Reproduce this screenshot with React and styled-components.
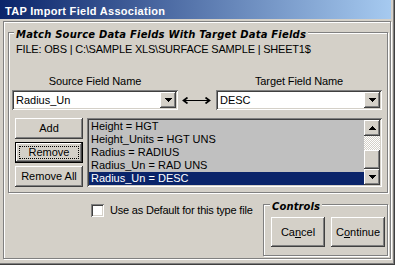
import styled, { createGlobalStyle } from "styled-components";

const FACE = "#d4d0c8";
const raised = `box-shadow: inset -1px -1px #404040, inset 1px 1px #fff, inset -2px -2px #808080, inset 2px 2px ${FACE};`;
const sunken = `box-shadow: inset 1px 1px #808080, inset -1px -1px #fff, inset 2px 2px #404040, inset -2px -2px ${FACE};`;
const etched = `border: 1px solid #808080; box-shadow: inset 1px 1px #fff, 1px 1px #fff;`;

const fields = [
  "Height = HGT",
  "Height_Units = HGT UNS",
  "Radius = RADIUS",
  "Radius_Un = RAD UNS",
  "Radius_Un = DESC",
];

const GlobalStyle = createGlobalStyle`
  html, body { margin: 0; padding: 0; background: ${FACE}; }
  body {
    font-family: "Liberation Sans", Arial, sans-serif;
    font-size: 11px;
    line-height: 13px;
    color: #000;
  }
`;

function Arrow({ up }) {
  return (
    <svg width="7" height="4" viewBox="0 0 7 4" shapeRendering="crispEdges">
      <path
        d={up ? "M3 0h1v1H3z M2 1h3v1H2z M1 2h5v1H1z M0 3h7v1H0z" : "M0 0h7v1H0z M1 1h5v1H1z M2 2h3v1H2z M3 3h1v1H3z"}
        fill="#000"
      />
    </svg>
  );
}

function Combo({ value }) {
  return (
    <ComboBox>
      <ComboText>{value}</ComboText>
      <DropButton>
        <Arrow />
      </DropButton>
    </ComboBox>
  );
}

export default function App() {
  return (
    <>
      <GlobalStyle />
      <Window>
        <TitleBar>TAP Import Field Association</TitleBar>
        <Body>
          <Frame>
            <GroupBox>
              <Caption $indent={2} $spacing={0.2}>Match Source Data Fields With Target Data Fields</Caption>
              <FileLine>FILE: OBS | C:\SAMPLE XLS\SURFACE SAMPLE | SHEET1$</FileLine>
              <PickGrid>
                <FieldLabel>Source Field Name</FieldLabel>
                <span />
                <FieldLabel>Target Field Name</FieldLabel>
                <Combo value="Radius_Un" />
                <LinkArrow width="29" height="7" viewBox="0 0 29 7">
                  <polyline points="5.5,0.5 1.5,3.5 5.5,6.5" fill="none" stroke="#000" strokeWidth="1.7" />
                  <line x1="2" y1="3.5" x2="27" y2="3.5" stroke="#000" strokeWidth="1" />
                  <polyline points="23.5,0.5 27.5,3.5 23.5,6.5" fill="none" stroke="#000" strokeWidth="1.7" />
                </LinkArrow>
                <Combo value="DESC" />
              </PickGrid>
              <ListRow>
                <ButtonColumn>
                  <Button $h={21}>Add</Button>
                  <Button $h={21} $default>Remove</Button>
                  <Button $h={21}>Remove All</Button>
                </ButtonColumn>
                <ListBox>
                  <Items>
                    {fields.map((f, i) => (
                      <Item key={f} $selected={i === fields.length - 1}>
                        {f}
                      </Item>
                    ))}
                  </Items>
                  <ScrollBar>
                    <ScrollButton>
                      <Arrow up />
                    </ScrollButton>
                    <Track />
                    <Thumb />
                    <ScrollButton>
                      <Arrow />
                    </ScrollButton>
                  </ScrollBar>
                </ListBox>
              </ListRow>
            </GroupBox>
            <BottomRow>
              <CheckRow>
                <CheckBox />
                <span>Use as Default for this type file</span>
              </CheckRow>
              <Controls>
                <Caption $indent={-1} $spacing={0.1}>Controls</Caption>
                <ControlButtons>
                  <Button $w={54} $h={30}>
                    Ca<u>n</u>cel
                  </Button>
                  <Button $w={54} $h={30}>
                    C<u>o</u>ntinue
                  </Button>
                </ControlButtons>
              </Controls>
            </BottomRow>
          </Frame>
        </Body>
      </Window>
    </>
  );
}

const Window = styled.div`
  width: 395px;
  height: 265px;
  box-sizing: border-box;
  background: ${FACE};
  display: flex;
  flex-direction: column;
  overflow: hidden;
  box-shadow: inset -1px -1px #404040, inset -2px -2px #808080;
`;

const TitleBar = styled.div`
  height: 19px;
  box-sizing: border-box;
  margin-right: 4px;
  padding: 5px 0 0 5px;
  background: linear-gradient(to right, #0a246a, #a6caf0);
  color: #fff;
  font-weight: bold;
  font-size: 11px;
  line-height: 13px;
  letter-spacing: 0.3px;
  white-space: nowrap;
`;

const Body = styled.div`
  padding: 2px 0 0 3px;
`;

const Frame = styled.div`
  width: 388px;
  height: 238px;
  box-sizing: border-box;
  ${etched}
  padding: 10px 0 0 4px;
  display: flex;
  flex-direction: column;
`;

const GroupBox = styled.div`
  width: 380px;
  box-sizing: border-box;
  ${etched}
  padding: 0 5px 5px 3px;
  display: flex;
  flex-direction: column;
`;

const Caption = styled.div`
  align-self: flex-start;
  margin: -4px 0 0 ${(p) => p.$indent}px;
  padding: 0 2px;
  background: ${FACE};
  font-family: "DejaVu Sans", sans-serif;
  font-style: italic;
  font-weight: bold;
  font-size: 10px;
  line-height: 12px;
  letter-spacing: ${(p) => p.$spacing}px;
  white-space: nowrap;
`;

const FileLine = styled.div`
  margin: 2px 0 0 4px;
  letter-spacing: -0.2px;
  white-space: nowrap;
`;

const PickGrid = styled.div`
  margin-top: 19px;
  display: grid;
  grid-template-columns: 166px 1fr 166px;
  grid-template-rows: 13px 20px;
  row-gap: 2px;
  align-items: center;
`;

const FieldLabel = styled.div`
  text-align: center;
  white-space: nowrap;
  letter-spacing: -0.1px;
`;

const LinkArrow = styled.svg`
  justify-self: center;
  margin-right: 2px;
`;

const ComboBox = styled.div`
  height: 20px;
  box-sizing: border-box;
  padding: 2px;
  ${sunken}
  display: flex;
`;

const ComboText = styled.div`
  flex: 1;
  background: #fff;
  padding-left: 2px;
  line-height: 16px;
`;

const DropButton = styled.div`
  width: 16px;
  height: 16px;
  background: ${FACE};
  ${raised}
  display: flex;
  align-items: center;
  justify-content: center;
`;

const ListRow = styled.div`
  margin-top: 8px;
  display: flex;
  gap: 4px;
`;

const ButtonColumn = styled.div`
  margin-left: 3px;
  width: 68px;
  display: flex;
  flex-direction: column;
  justify-content: space-between;
`;

const Button = styled.button`
  width: ${(p) => (p.$w ? `${p.$w}px` : "100%")};
  height: ${(p) => p.$h}px;
  box-sizing: border-box;
  padding: 0;
  margin: 0;
  font: inherit;
  color: #000;
  background: ${FACE};
  border: ${(p) => (p.$default ? "1px solid #000" : "none")};
  ${raised}
  outline: ${(p) => (p.$default ? "1px dotted #000" : "none")};
  outline-offset: -5px;
  white-space: nowrap;
  u {
    text-decoration-thickness: 1px;
    text-underline-offset: 1px;
  }
`;

const ListBox = styled.div`
  width: 295px;
  height: 69px;
  box-sizing: border-box;
  padding: 2px;
  background: #c0c0c0;
  ${sunken}
  display: flex;
`;

const Items = styled.div`
  flex: 1;
  display: flex;
  flex-direction: column;
  overflow: hidden;
`;

const Item = styled.div`
  height: 13px;
  line-height: 13px;
  padding-left: 2px;
  white-space: nowrap;
  background: ${(p) => (p.$selected ? "#0a246a" : "transparent")};
  color: ${(p) => (p.$selected ? "#fff" : "#000")};
`;

const ScrollBar = styled.div`
  width: 16px;
  display: flex;
  flex-direction: column;
`;

const ScrollButton = styled.div`
  height: 16px;
  flex: none;
  background: ${FACE};
  ${raised}
  display: flex;
  align-items: center;
  justify-content: center;
`;

const Track = styled.div`
  flex: 1;
  background-color: #fff;
  background-image: conic-gradient(${FACE} 25%, #fff 0 50%, ${FACE} 0 75%, #fff 0);
  background-size: 2px 2px;
`;

const Thumb = styled.div`
  height: 19px;
  flex: none;
  background: ${FACE};
  ${raised}
`;

const BottomRow = styled.div`
  display: flex;
  align-items: flex-start;
`;

const CheckRow = styled.label`
  margin: 11px 0 0 83px;
  display: flex;
  align-items: center;
  gap: 6px;
  letter-spacing: -0.2px;
  white-space: nowrap;
`;

const CheckBox = styled.span`
  width: 13px;
  height: 13px;
  box-sizing: border-box;
  background: #fff;
  ${sunken}
`;

const Controls = styled.div`
  margin: 11px 2px 0 auto;
  width: 125px;
  height: 52px;
  box-sizing: border-box;
  ${etched}
  padding: 0 1px 0 7px;
  display: flex;
  flex-direction: column;
`;

const ControlButtons = styled.div`
  margin-top: 4px;
  display: flex;
  gap: 6px;
`;
